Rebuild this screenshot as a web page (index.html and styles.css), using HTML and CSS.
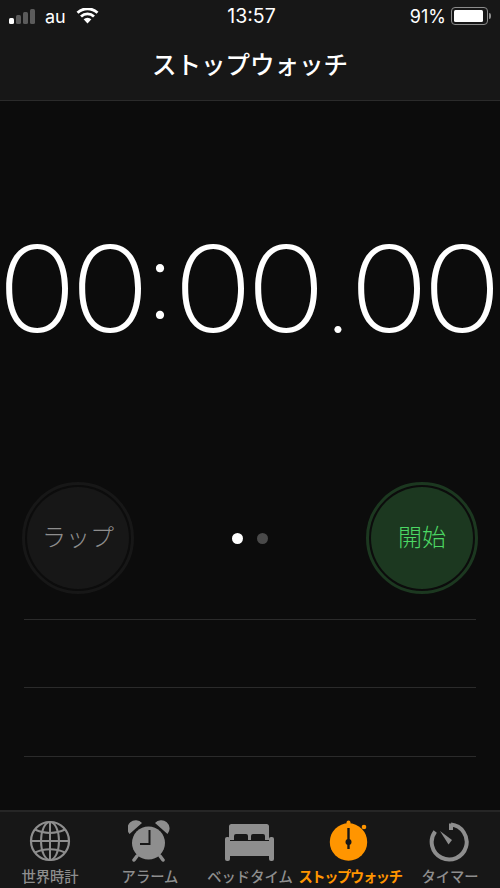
FILE: index.html
```html
<!DOCTYPE html>
<html lang="ja">
<head>
    <meta charset="UTF-8">
    <title>ストップウォッチ</title>
    <link rel="stylesheet" href="styles.css">
</head>
<body>
 <header class="top">
    <div class="status">
        <div class="status-left">
            <div class="signal">
                <span class="bar on"></span><span class="bar"></span><span class="bar"></span><span class="bar"></span>
            </div>
            <span class="carrier">au</span>
            <svg class="wifi" width="23" height="16" viewBox="0 0 23 16">
                <path d="M11.5 15.5 L7.6 11.300 A5.600 5.600 0 0 1 15.400 11.300 Z" fill="#fff"/>
                <path d="M5 8.400 A9.400 9.400 0 0 1 18 8.400" fill="none" stroke="#fff" stroke-width="2.800"/>
                <path d="M1.500 4.800 A14.400 14.400 0 0 1 21.500 4.800" fill="none" stroke="#fff" stroke-width="2.800"/>
            </svg>
        </div>
        <div class="clock">13:57</div>
        <div class="status-right">
            <span>91%</span>
            <div class="battery"><div class="level"></div></div>
            <div class="tip"></div>
        </div>
    </div>
    <h1>ストップウォッチ</h1>
 </header>

 <main>
    <div class="timer">
        <span class="digit">0</span><span class="digit">0</span><span class="sep colon">:</span><span class="digit">0</span><span class="digit">0</span><span class="sep point">.</span><span class="digit">0</span><span class="digit">0</span>
    </div>

    <div class="controls">
        <div class="btn lap"><div class="btn-in">ラップ</div></div>
        <div class="pager">
            <span class="dot active"></span>
            <span class="dot"></span>
        </div>
        <div class="btn start"><div class="btn-in">開始</div></div>
    </div>

    <div class="laps">
        <div class="lap-row"></div>
        <div class="lap-row"></div>
        <div class="lap-row"></div>
    </div>
 </main>

 <nav class="tabs">
    <div class="tab">
        <svg width="42" height="42" viewBox="0 0 42 42" fill="none" stroke="#8e8e8e" stroke-width="2">
            <circle cx="21" cy="21" r="19" stroke-width="2.200"/>
            <ellipse cx="21" cy="21" rx="9" ry="19"/>
            <path d="M21 2V40M2 21H40"/>
            <path d="M6 9.500C15 14 27 14 36 9.500M6 32.500C15 28 27 28 36 32.500"/>
        </svg>
        <span>世界時計</span>
    </div>
    <div class="tab">
        <svg width="44" height="42" viewBox="0 0 44 42">
            <circle cx="20.500" cy="23" r="16.500" fill="#8e8e8e"/>
            <path d="M1.500 14 A8 8 0 0 1 14 3 Z M39.500 14 A8 8 0 0 0 27 3 Z" fill="#8e8e8e"/>
            <path d="M9 36 L6 40 M32 36 L35 40" stroke="#8e8e8e" stroke-width="3.500" stroke-linecap="round"/>
            <path d="M21.500 10 V24 H12" fill="none" stroke="#171717" stroke-width="2"/>
        </svg>
        <span>アラーム</span>
    </div>
    <div class="tab">
        <svg width="50" height="42" viewBox="0 0 50 42" fill="#8e8e8e">
            <path d="M4 20V6.500a2.500 2.500 0 0 1 2.500-2.500H41.500a2.500 2.500 0 0 1 2.500 2.500V20Z"/>
            <path d="M9 20V16a2 2 0 0 1 2-2H21a2 2 0 0 1 2 2V20ZM26 20V16a2 2 0 0 1 2-2H38a2 2 0 0 1 2 2V20Z" fill="#171717"/>
            <rect x="5" y="20" width="39" height="1" fill="#171717"/>
            <path d="M5 21H44V36H5Z"/>
            <rect x="0" y="17" width="5" height="24" rx="2"/>
            <rect x="44" y="17" width="5" height="24" rx="2"/>
        </svg>
        <span>ベッドタイム</span>
    </div>
    <div class="tab active">
        <svg width="42" height="42" viewBox="0 0 42 42">
            <circle cx="19.500" cy="22" r="18.700" fill="#ff9500"/>
            <rect x="17.500" y="0.500" width="4" height="5" rx="2" fill="#ff9500"/>
            <circle cx="35" cy="7" r="2.300" fill="#ff9500"/>
            <path d="M19.500 8 V29" stroke="#171717" stroke-width="2.400"/>
            <circle cx="19.500" cy="22" r="3" fill="#171717"/>
        </svg>
        <span>ストップウォッチ</span>
    </div>
    <div class="tab">
        <svg width="42" height="42" viewBox="0 0 42 42" fill="none">
            <path d="M22 3.500 V10 M22 4.600 A17.500 17.500 0 1 1 6.200 11.500" stroke="#8e8e8e" stroke-width="4"/>
            <path d="M11 11 L23 20 L19.500 24.500 Z" fill="#8e8e8e"/>
        </svg>
        <span>タイマー</span>
    </div>
 </nav>
</body>
</html>
```

FILE: styles.css
```css
*{
    margin: 0;
    padding: 0;
    box-sizing: border-box;
}

body{
    width: 500px;
    height: 888px;
    overflow: hidden;
    display: flex;
    flex-direction: column;
    background-color: #0c0c0c;
    color: white;
    font-family: Inter, "Noto Sans CJK JP", sans-serif;
}

.top{
    height: 101px;
    flex-shrink: 0;
    background-color: #171717;
    border-bottom: 1px solid #2b2b2b;
}

.status{
    height: 32px;
    padding: 0 9px 0 9px;
    display: flex;
    align-items: center;
    justify-content: space-between;
    font-size: 18px;
}

.status-left{
    width: 180px;
    display: flex;
    align-items: center;
}

.signal{
    display: flex;
    align-items: flex-end;
    gap: 2px;
    height: 15px;
}

.bar{
    width: 5px;
    background-color: #5b5b5b;
    border-radius: 1.500px;
}
.bar:nth-child(1){ height: 6px; }
.bar:nth-child(2){ height: 9px; }
.bar:nth-child(3){ height: 12px; }
.bar:nth-child(4){ height: 15px; }
.bar.on{ background-color: white; }

.carrier{
    margin-left: 10px;
    margin-right: 10px;
}

.clock{
    margin-left: 3px;
    font-size: 19.500px;
}

.status-right{
    width: 180px;
    display: flex;
    align-items: center;
    justify-content: flex-end;
}

.battery{
    width: 37px;
    height: 18px;
    margin-left: 5px;
    padding: 2px;
    border: 1.500px solid #8c8c8c;
    border-radius: 4px;
}

.level{
    width: 92%;
    height: 100%;
    background-color: white;
    border-radius: 1.500px;
}

.tip{
    width: 2px;
    height: 6px;
    margin-left: 1px;
    background-color: #8c8c8c;
    border-radius: 0 2px 2px 0;
}

h1{
    margin-top: 13px;
    text-align: center;
    font-size: 24.500px;
    font-weight: 500;
    line-height: 40px;
}

main{
    flex: 1;
    min-height: 0;
}

.timer{
    height: 381px;
    padding-top: 113px;
    display: flex;
    justify-content: center;
    font-weight: 200;
    font-size: 120px;
    line-height: 150px;
}

.digit{
    width: 73px;
    letter-spacing: -12px;
    transform: scaleX(1.100);
}

.sep{
    width: 30px;
    text-align: center;
}

.colon{
    font-size: 105px;
    line-height: 132px;
    letter-spacing: -8px;
    margin-left: -6px;
    margin-right: 6px;
}

.point{
    font-size: 90px;
    line-height: 174px;
    letter-spacing: -4px;
    margin-left: -2px;
    margin-right: 2px;
}

.controls{
    height: 112px;
    padding: 0 22px;
    display: flex;
    align-items: center;
    justify-content: space-between;
}

.btn{
    width: 112px;
    height: 112px;
    padding: 2px;
    border-radius: 50%;
    border: 3px solid #171717;
}

.btn-in{
    width: 100%;
    height: 100%;
    padding-bottom: 5px;
    border-radius: 50%;
    display: flex;
    align-items: center;
    justify-content: center;
    font-size: 24px;
    font-weight: 300;
}

.lap .btn-in{
    background-color: #171717;
    color: #8e8e8e;
}

.start{
    border-color: #1c3820;
}

.start .btn-in{
    background-color: #1c3820;
    color: #4cd964;
}

.pager{
    display: flex;
    gap: 14px;
}

.dot{
    width: 11px;
    height: 11px;
    border-radius: 50%;
    background-color: #4a4a4a;
}
.dot.active{ background-color: white; }

.laps{
    margin: 25px 24px 0;
}

.lap-row{
    height: 68.400px;
    border-top: 1px solid #2b2b2b;
}

.tabs{
    height: 78px;
    flex-shrink: 0;
    background-color: #171717;
    border-top: 2px solid #262626;
    display: grid;
    grid-template-columns: repeat(5, 100px);
}

.tab{
    display: flex;
    flex-direction: column;
    align-items: center;
    padding-top: 8px;
    color: #8e8e8e;
    font-size: 14.300px;
    font-weight: 500;
    white-space: nowrap;
}

.tab svg{
    display: block;
    height: 42px;
}

.tab span{
    margin-top: 5px;
    line-height: 20px;
}

.tab.active{
    color: #ff9500;
    font-weight: 700;
    letter-spacing: -1.400px;
}
```
